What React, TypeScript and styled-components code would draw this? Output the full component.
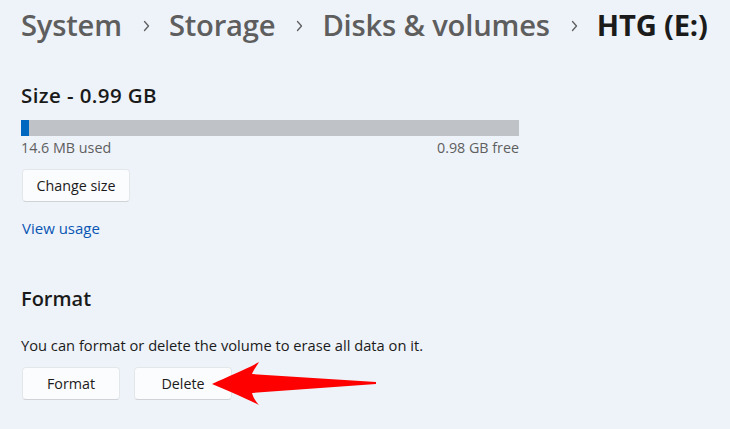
import React from "react";
import styled, { createGlobalStyle } from "styled-components";

const Global = createGlobalStyle`
  html, body { margin: 0; padding: 0; background: #eef3f9; }
  body { font-family: "Open Sans", "Noto Sans", "Liberation Sans", sans-serif; }
  * { box-sizing: border-box; }
`;

const Page = styled.div`
  width: 730px;
  height: 429px;
  background: #eef3f9;
  padding: 7px 0 0 21px;
  display: flex;
  flex-direction: column;
  overflow: hidden;
`;

const Breadcrumb = styled.nav`
  display: flex;
  align-items: center;
  height: 37px;
  white-space: nowrap;
`;

const Crumb = styled.span<{ $current?: boolean }>`
  font-size: 29.2px;
  font-weight: ${(p) => (p.$current ? 700 : 600)};
  color: ${(p) => (p.$current ? "#1b1b1b" : "#5e5e5e")};
  letter-spacing: -0.2px;
  line-height: 37px;
`;

const Sep = styled.span`
  display: flex;
  align-items: center;
  margin: 0 19px 0 21px;
  padding-top: 1px;
`;

const Section = styled.section<{ $top: number }>`
  display: flex;
  flex-direction: column;
  margin-top: ${(p) => p.$top}px;
`;

const Heading = styled.h2`
  margin: 0;
  font-size: 20px;
  font-weight: 600;
  color: #1a1a1a;
  line-height: 26px;
`;

const SizeHeading = styled(Heading)`
  font-size: 20.5px;
  letter-spacing: 0.4px;
`;

const Bar = styled.div`
  width: 498px;
  height: 16px;
  background: #bfc3c7;
  margin-top: 12px;
  display: flex;
`;

const BarFill = styled.div`
  height: 100%;
  background: #0067c0;
`;

const BarLabels = styled.div`
  width: 498px;
  display: flex;
  justify-content: space-between;
  font-size: 14.3px;
  color: #5f5f5f;
  line-height: 20px;
  margin-top: 2px;
`;

const ButtonSlot = styled.div`
  display: flex;
  margin-top: 11px;
  padding-left: 1px;
`;

const Button = styled.button<{ $w: number }>`
  width: ${(p) => p.$w}px;
  height: 33px;
  background: #fbfcfd;
  border: 1px solid #e4e7ea;
  border-bottom-color: #cfd3d7;
  border-radius: 4px;
  font-family: inherit;
  font-size: 14.3px;
  color: #1b1b1b;
  padding: 0;
  cursor: pointer;
`;

const Link = styled.a`
  font-size: 15px;
  color: #0a56b4;
  line-height: 20px;
  margin-top: 16px;
  padding-left: 1px;
  text-decoration: none;
  align-self: flex-start;
`;

const Description = styled.p`
  margin: 23px 0 0;
  font-size: 14.7px;
  color: #1b1b1b;
  line-height: 20px;
`;

const ButtonRow = styled.div`
  display: flex;
  gap: 14px;
  margin-top: 12px;
  padding-left: 1px;
  position: relative;
`;

const ArrowWrap = styled.div`
  position: absolute;
  left: 190px;
  top: -6px;
  pointer-events: none;
`;

const Chevron = () => (
  <svg width="7" height="12" viewBox="0 0 7 12">
    <path d="M1.5 1.5 L5.5 6 L1.5 10.5" fill="none" stroke="#5e5e5e" strokeWidth="1.3" strokeLinecap="round" strokeLinejoin="round" />
  </svg>
);

const RedArrow = () => (
  <svg width="190" height="48" viewBox="0 0 190 48">
    <path
      d="M1 23 C 18 15, 36 8, 48 1 C 45 6, 42 10, 41 13 L 165 21 L 165 23 L 41 32 C 42 36, 45 41, 48 44 C 36 38, 18 30, 1 23 Z"
      fill="#fe0000"
    />
  </svg>
);

export default function App() {
  const crumbs = ["System", "Storage", "Disks & volumes"];
  return (
    <>
      <Global />
      <Page>
        <Breadcrumb>
          {crumbs.map((c) => (
            <React.Fragment key={c}>
              <Crumb>{c}</Crumb>
              <Sep>
                <Chevron />
              </Sep>
            </React.Fragment>
          ))}
          <Crumb $current>HTG (E:)</Crumb>
        </Breadcrumb>

        <Section $top={38}>
          <SizeHeading>Size - 0.99 GB</SizeHeading>
          <Bar>
            <BarFill style={{ width: `${(14.6 / 1013) * 498 + 1}px` }} />
          </Bar>
          <BarLabels>
            <span>14.6 MB used</span>
            <span>0.98 GB free</span>
          </BarLabels>
          <ButtonSlot>
            <Button $w={108}>Change size</Button>
          </ButtonSlot>
          <Link href="#">View usage</Link>
        </Section>

        <Section $top={48}>
          <Heading>Format</Heading>
          <Description>You can format or delete the volume to erase all data on it.</Description>
          <ButtonRow>
            <Button $w={98}>Format</Button>
            <Button $w={98}>Delete</Button>
            <ArrowWrap>
              <RedArrow />
            </ArrowWrap>
          </ButtonRow>
        </Section>
      </Page>
    </>
  );
}
